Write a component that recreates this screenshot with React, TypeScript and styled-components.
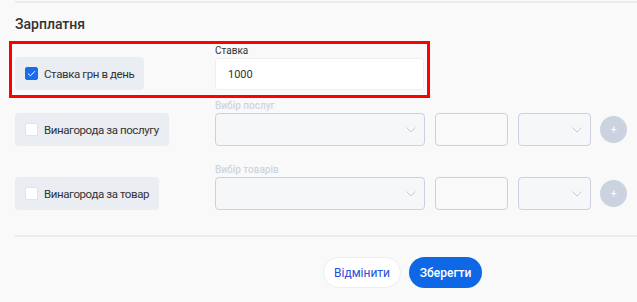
import styled, { createGlobalStyle } from "styled-components";

const GlobalStyle = createGlobalStyle`
    body {
        margin: 0;
        background: #f9f9f9;
        font-family: Roboto, "Noto Sans", "Liberation Sans", sans-serif;
        color: #333;
    }
`;

type ChipProps = { label: string; checked?: boolean };

function CheckChip({ label, checked }: ChipProps) {
    return (
        <ChipStl>
            <BoxStl $checked={checked}>
                {checked && (
                    <svg width="9" height="7" viewBox="0 0 9 7">
                        <polyline points="1,3.6 3.4,5.8 8,1.2" fill="none" stroke="#fff" strokeWidth="1" />
                    </svg>
                )}
            </BoxStl>
            {label}
        </ChipStl>
    );
}

const Chevron = () => (
    <svg width="10" height="6" viewBox="0 0 10 6">
        <polyline points="0.5,0.5 5,5 9.5,0.5" fill="none" stroke="#c7cdd8" strokeWidth="1" />
    </svg>
);

function ItemRow({ chip, label }: { chip: string; label: string }) {
    return (
        <RowStl>
            <ChipCol>
                <CheckChip label={chip} />
            </ChipCol>
            <div>
                <FieldLabel $muted>{label}</FieldLabel>
                <ControlsStl>
                    <SelectStl $width={210}><Chevron /></SelectStl>
                    <QtyStl />
                    <SelectStl $width={73}><Chevron /></SelectStl>
                    <PlusStl>+</PlusStl>
                </ControlsStl>
            </div>
        </RowStl>
    );
}

export default function App() {
    return (
        <PageStl>
            <GlobalStyle />
            <TopRule />
            <Titulo>Зарплатня</Titulo>
            <HighlightStl>
                <RowStl>
                    <ChipCol>
                        <CheckChip label="Ставка грн в день" checked />
                    </ChipCol>
                    <div>
                        <FieldLabel>Ставка</FieldLabel>
                        <TextInput defaultValue="1000" />
                    </div>
                </RowStl>
            </HighlightStl>
            <RowWrap $top={2}>
                <ItemRow chip="Винагорода за послугу" label="Вибір послуг" />
            </RowWrap>
            <RowWrap $top={18}>
                <ItemRow chip="Винагорода за товар" label="Вибір товарів" />
            </RowWrap>
            <Divider />
            <ActionsStl>
                <CancelBtn>Відмінити</CancelBtn>
                <SaveBtn>Зберегти</SaveBtn>
            </ActionsStl>
        </PageStl>
    );
}

const PageStl = styled.div`
    width: 637px;
    height: 302px;
    overflow: hidden;
    padding-left: 15px;
    box-sizing: border-box;
`;

const TopRule = styled.div`
    height: 2px;
    margin-top: 1px;
    background: #ececec;
`;

const Titulo = styled.h2`
    margin: 11px 0 0;
    font-size: 14px;
    line-height: 20px;
    font-weight: 500;
    color: #333;
`;

const HighlightStl = styled.div`
    margin: 7px 0 0 -6px;
    width: 421px;
    box-sizing: border-box;
    border: 3px solid #ff0000;
    padding: 1px 3px 5px 3px;
`;

const RowWrap = styled.div<{ $top: number }>`
    margin-top: ${(p) => p.$top}px;
`;

const RowStl = styled.div`
    display: flex;
    align-items: stretch;
`;

const ChipCol = styled.div`
    width: 200px;
    flex-shrink: 0;
    display: flex;
    align-items: flex-end;
`;

const ChipStl = styled.div`
    display: flex;
    align-items: center;
    gap: 6px;
    height: 33px;
    padding: 0 10px;
    box-sizing: border-box;
    background: #eaedf2;
    border-radius: 4px;
    font-size: 11.5px;
    letter-spacing: -0.4px;
    color: #333;
    white-space: nowrap;
`;

const BoxStl = styled.span<{ $checked?: boolean }>`
    width: 13px;
    height: 13px;
    box-sizing: border-box;
    border-radius: 2px;
    display: flex;
    align-items: center;
    justify-content: center;
    background: ${(p) => (p.$checked ? "#1a6de8" : "#fff")};
    border: 1px solid ${(p) => (p.$checked ? "#1a6de8" : "#dfe3ea")};
`;

const FieldLabel = styled.div<{ $muted?: boolean }>`
    font-size: 10px;
    line-height: 12px;
    margin-bottom: 1px;
    font-weight: ${(p) => (p.$muted ? 500 : 400)};
    color: ${(p) => (p.$muted ? "#cfd5df" : "#333")};
`;

const TextInput = styled.input`
    display: block;
    width: 209px;
    height: 32px;
    box-sizing: border-box;
    border: 1px solid #eeeeee;
    border-radius: 3px;
    background: #fff;
    padding: 0 12px;
    font-family: inherit;
    font-size: 11px;
    color: #333;
    outline: none;
`;

const ControlsStl = styled.div`
    display: flex;
    align-items: center;
    gap: 10px;
`;

const SelectStl = styled.div<{ $width: number }>`
    width: ${(p) => p.$width}px;
    height: 33px;
    box-sizing: border-box;
    border: 1px solid #cbd2de;
    border-radius: 4px;
    background: #f6f7f8;
    display: flex;
    align-items: center;
    justify-content: flex-end;
    padding-right: 8px;
`;

const QtyStl = styled.div`
    width: 73px;
    height: 33px;
    box-sizing: border-box;
    border: 1px solid #cbd2de;
    border-radius: 4px;
    background: #f9f9f9;
`;

const PlusStl = styled.div`
    width: 27px;
    height: 27px;
    margin-left: -1px;
    border-radius: 50%;
    background: #cbd2e0;
    color: #fff;
    font-size: 11px;
    line-height: 27px;
    text-align: center;
`;

const Divider = styled.div`
    height: 2px;
    margin-top: 25px;
    background: #ececec;
`;

const ActionsStl = styled.div`
    display: flex;
    gap: 8px;
    margin-top: 20px;
    padding-left: 308px;
`;

const BaseBtn = styled.button`
    height: 31px;
    border-radius: 16px;
    font-family: inherit;
    font-size: 12px;
    cursor: pointer;
`;

const CancelBtn = styled(BaseBtn)`
    width: 78px;
    background: #fff;
    border: 1px solid #eeeeee;
    color: #2750d6;
    font-weight: 400;
`;

const SaveBtn = styled(BaseBtn)`
    width: 73px;
    background: #0e68e6;
    border: none;
    color: #fff;
    font-weight: 500;
`;
